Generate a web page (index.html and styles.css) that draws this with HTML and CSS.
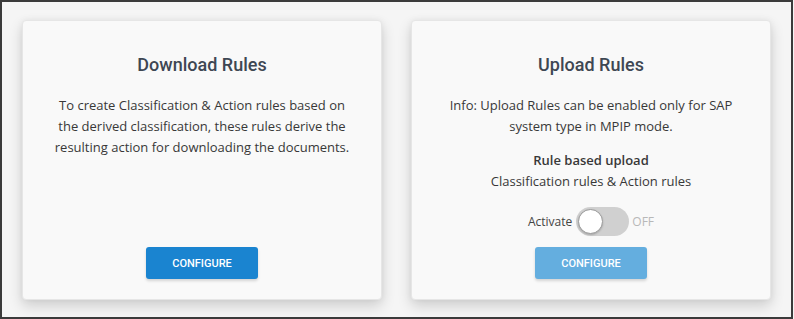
FILE: index.html
```html
<!DOCTYPE html>
<html lang="en">
<head>
  <meta charset="UTF-8" />
  <meta name="viewport" content="width=device-width, initial-scale=1" />
  <title>Rules</title>
  <link rel="stylesheet" href="styles.css">
</head>
<body>
  <div class="frame">
    <div class="cards">

      <!-- Download -->
      <div class="card">
        <h3 class="card-title">Download Rules</h3>
        <p class="card-text">To create Classification &amp; Action rules based on the derived classification, these rules derive the resulting action for downloading the documents.</p>
        <button class="btn">CONFIGURE</button>
      </div>

      <!-- Upload -->
      <div class="card">
        <h3 class="card-title">Upload Rules</h3>
        <p class="card-text">Info: Upload Rules can be enabled only for SAP system type in MPIP mode.</p>
        <div class="sub-title">Rule based upload</div>
        <div class="card-text">Classification rules &amp; Action rules</div>
        <div class="switch-row">
          <span class="switch-label">Activate</span>
          <label class="switch">
            <input type="checkbox" id="uploadToggle">
            <span class="slider"></span>
          </label>
          <span class="switch-status">OFF</span>
        </div>
        <button class="btn btn-disabled" disabled>CONFIGURE</button>
      </div>

    </div>
  </div>
</body>
</html>
```

FILE: styles.css
```css
body {
  margin: 0;
  background-color: #f5f5f5;
  font-family: "Open Sans", Arial, sans-serif;
}

.frame {
  box-sizing: border-box;
  width: 793px;
  height: 319px;
  border: 2px solid #3b3b3b;
  background-color: #f5f5f5;
}

.cards {
  display: flex;
  gap: 29px;
  padding: 18px 0 0 20px;
}

.card {
  box-sizing: border-box;
  width: 360px;
  height: 280px;
  display: flex;
  flex-direction: column;
  align-items: center;
  padding: 32px 27px 20px;
  background-color: #f9f9f9;
  border: 1px solid #e6e6e6;
  border-radius: 4px;
  box-shadow: 0 6px 14px rgba(0, 0, 0, 0.16), 0 0 6px rgba(0, 0, 0, 0.05);
}

.card-title {
  margin: 0 0 18px;
  font-family: Roboto, Arial, sans-serif;
  font-size: 18px;
  font-weight: 500;
  line-height: 24px;
  color: #3e4753;
}

.card-text {
  margin: 0;
  font-size: 13px;
  line-height: 21px;
  color: #383838;
  text-align: center;
}

.sub-title {
  margin-top: 13px;
  font-size: 13px;
  font-weight: 600;
  line-height: 21px;
  color: #383838;
}

.switch-row {
  display: flex;
  align-items: center;
  margin-top: 15px;
  font-size: 12px;
}

.switch-label {
  margin-right: 4px;
  color: #444;
}

.switch {
  position: relative;
  display: inline-block;
  width: 53px;
  height: 29px;
}

.switch input {
  opacity: 0;
  width: 0;
  height: 0;
}

.slider {
  position: absolute;
  top: 0;
  left: 0;
  right: 0;
  bottom: 0;
  background-color: #d0d0d0;
  border-radius: 15px;
  cursor: pointer;
}

.slider:before {
  position: absolute;
  content: "";
  box-sizing: border-box;
  width: 25px;
  height: 25px;
  left: 2px;
  top: 2px;
  background-color: #fff;
  border: 1px solid #9a9a9a;
  border-radius: 50%;
  box-shadow: 0 1px 2px rgba(0, 0, 0, 0.2);
}

.switch-status {
  margin-left: 3px;
  color: #b8b8b8;
}

.btn {
  margin-top: auto;
  width: 112px;
  height: 32px;
  border: none;
  border-radius: 3px;
  background-color: #1a84d0;
  color: #fff;
  font-family: Roboto, Arial, sans-serif;
  font-size: 11px;
  font-weight: 500;
  box-shadow: 0 2px 3px rgba(0, 0, 0, 0.15);
  cursor: pointer;
}

.btn-disabled {
  background-color: #64aedf;
  cursor: default;
}
```
